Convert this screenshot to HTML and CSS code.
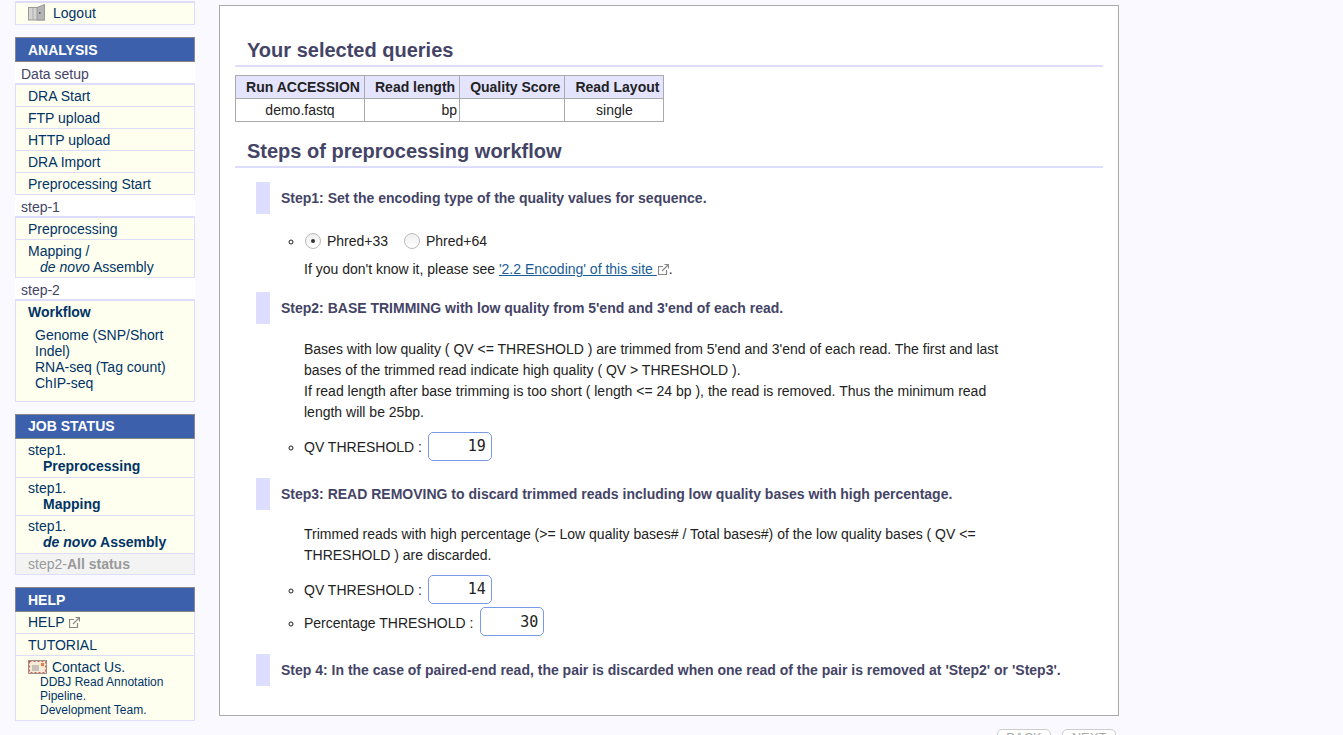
FILE: index.html
```html
<!DOCTYPE html>
<html lang="en">

<head>
    <meta charset="UTF-8">
    <title>Preprocessing workflow</title>
    <link rel="stylesheet" href="styles.css">
</head>

<body>
    <div class="wrapper">
        <div class="sidebar">
            <ul class="menu logoutBox">
                <li class="logout">
                    <svg class="doorIcon" width="18" height="17" viewBox="0 0 18 17">
                        <rect x="0.5" y="3.5" width="16" height="12.5" fill="#d4d4d4" stroke="#999"/>
                        <path d="M9 3.5 L16.5 0.5 V16 H9 Z" fill="#b5b5b5" stroke="#999"/>
                        <path d="M5 4v12" stroke="#aaa"/>
                        <rect x="11" y="8" width="1.5" height="2" fill="#666"/>
                    </svg>
                    <a>Logout</a>
                </li>
            </ul>

            <h3 class="menuTitle">ANALYSIS</h3>
            <p class="menuLabel">Data setup</p>
            <ul class="menu">
                <li><a>DRA Start</a></li>
                <li><a>FTP upload</a></li>
                <li><a>HTTP upload</a></li>
                <li><a>DRA Import</a></li>
                <li><a>Preprocessing Start</a></li>
            </ul>
            <p class="menuLabel">step-1</p>
            <ul class="menu">
                <li><a>Preprocessing</a></li>
                <li class="twoLine mapping"><a>Mapping /<br><span class="indent"><i>de novo</i> Assembly</span></a></li>
            </ul>
            <p class="menuLabel">step-2</p>
            <ul class="menu workflowBox">
                <li class="workflow">
                    <a class="current">Workflow</a>
                    <ul class="subMenu">
                        <li>Genome (SNP/Short Indel)</li>
                        <li>RNA-seq (Tag count)</li>
                        <li>ChIP-seq</li>
                    </ul>
                </li>
            </ul>

            <h3 class="menuTitle jobTitle">JOB STATUS</h3>
            <ul class="menu noTop">
                <li class="twoLine job"><a>step1.<br><b class="indent">Preprocessing</b></a></li>
                <li class="twoLine job"><a>step1.<br><b class="indent">Mapping</b></a></li>
                <li class="twoLine job"><a>step1.<br><b class="indent"><i>de novo</i> Assembly</b></a></li>
                <li class="disabled">step2-<b>All status</b></li>
            </ul>

            <h3 class="menuTitle">HELP</h3>
            <ul class="menu noTop">
                <li class="helpLink">
                    <a>HELP</a>
                    <svg class="extIcon" width="11" height="11" viewBox="0 0 11 11">
                        <path d="M8.5 6v4.5h-8v-8H5" fill="none" stroke="#888" stroke-width="1.2"/>
                        <path d="M4 7 L10 1 M6.5 .5h4v4" fill="none" stroke="#888" stroke-width="1.2"/>
                    </svg>
                </li>
                <li><a>TUTORIAL</a></li>
                <li class="contact">
                    <svg class="mailIcon" width="19" height="14" viewBox="0 0 19 14">
                        <rect x="0.5" y="0.5" width="18" height="13" fill="#f6ead8" stroke="#a09088"/>
                        <rect x="1.5" y="1.5" width="16" height="11" fill="none" stroke="#d0604c" stroke-width="1.2" stroke-dasharray="2 2"/>
                        <path d="M4 6h7M4 8h7M4 10h7" stroke="#999"/>
                        <rect x="13" y="3" width="3" height="3" fill="#e08040"/>
                    </svg>
                    <a>Contact Us.</a>
                    <p class="team">DDBJ Read Annotation Pipeline.<br>Development Team.</p>
                </li>
            </ul>
        </div>

        <div class="main">
            <div class="panel">
                <h2>Your selected queries</h2>
                <table class="queries">
                    <tr>
                        <th class="colRun">Run ACCESSION</th>
                        <th class="colLength">Read length</th>
                        <th class="colScore">Quality Score</th>
                        <th class="colLayout">Read Layout</th>
                    </tr>
                    <tr>
                        <td>demo.fastq</td>
                        <td class="right">bp</td>
                        <td></td>
                        <td>single</td>
                    </tr>
                </table>

                <h2 class="second">Steps of preprocessing workflow</h2>

                <h4 class="step">Step1: Set the encoding type of the quality values for sequence.</h4>
                <ul class="options radioList">
                    <li>
                        <span class="radio checked"></span><span class="radioText">Phred+33</span>
                        <span class="radio"></span><span>Phred+64</span>
                    </li>
                </ul>
                <p class="note">If you don't know it, please see <a class="link">'2.2 Encoding' of this site <svg class="extIcon" width="11" height="11" viewBox="0 0 11 11">
                        <path d="M8.5 6v4.5h-8v-8H5" fill="none" stroke="#888" stroke-width="1.2"/>
                        <path d="M4 7 L10 1 M6.5 .5h4v4" fill="none" stroke="#888" stroke-width="1.2"/>
                    </svg></a>.</p>

                <h4 class="step">Step2: BASE TRIMMING with low quality from 5'end and 3'end of each read.</h4>
                <p class="desc">Bases with low quality ( QV &lt;= THRESHOLD ) are trimmed from 5'end and 3'end of each read. The first and last bases of the trimmed read indicate high quality ( QV &gt; THRESHOLD ).<br>If read length after base trimming is too short ( length &lt;= 24 bp ), the read is removed. Thus the minimum read length will be 25bp.</p>
                <ul class="options">
                    <li class="field">QV THRESHOLD : <input class="num" type="text" value="19"></li>
                </ul>

                <h4 class="step">Step3: READ REMOVING to discard trimmed reads including low quality bases with high percentage.</h4>
                <p class="desc tightDesc">Trimmed reads with high percentage (&gt;= Low quality bases# / Total bases#) of the low quality bases ( QV &lt;= THRESHOLD ) are discarded.</p>
                <ul class="options">
                    <li class="field">QV THRESHOLD : <input class="num" type="text" value="14"></li>
                    <li class="field">Percentage THRESHOLD : <input class="num wide" type="text" value="30"></li>
                </ul>

                <h4 class="step lastStep">Step 4: In the case of paired-end read, the pair is discarded when one read of the pair is removed at 'Step2' or 'Step3'.</h4>
            </div>
            <div class="buttons">
                <button class="btn">BACK</button>
                <button class="btn">NEXT</button>
            </div>
        </div>
    </div>
</body>

</html>
```
FILE: styles.css
```css
* {
    margin: 0;
    padding: 0;
    box-sizing: border-box;
}

html, body {
    height: 735px;
    overflow: hidden;
}

body {
    background: #f9f9ff;
    font-family: "Liberation Sans", Arial, sans-serif;
    font-size: 14px;
    color: #222;
}

ul {
    list-style: none;
}

.wrapper {
    display: flex;
    align-items: flex-start;
    padding: 1px 0 0 15px;
    gap: 24px;
}

/* left menu */
.sidebar {
    width: 180px;
    flex-shrink: 0;
}

.menu {
    border: 1px solid #ddf;
    border-top-width: 2px;
    background: #fffff0;
}

.menu.noTop {
    border-top: none;
    margin-bottom: 12px;
}

.menu > li {
    border-top: 1px solid #ddf;
    min-height: 22px;
    padding: 2px 12px 0;
    line-height: 18px;
    color: #036;
}

.menu > li:first-child {
    border-top: none;
    min-height: 21px;
}

.menu a {
    color: #036;
}

.logoutBox {
    margin-bottom: 12px;
}

.menu > .logout {
    display: flex;
    align-items: center;
    gap: 7px;
    height: 21px;
    padding: 0 12px 2px;
}

.menuTitle {
    background: #3c60ab;
    border: 1px solid #888;
    color: #fff;
    font-size: 14px;
    line-height: 24px;
    height: 25px;
    padding-left: 12px;
}

.jobTitle {
    line-height: 23px;
}

.menuLabel {
    background: #fff;
    color: #446;
    line-height: 25px;
    height: 21px;
    padding-left: 6px;
}

.menu > .twoLine {
    line-height: 16px;
    height: 38px;
}

.menu > .mapping {
    padding-top: 3px;
}

.menu > .job:first-child {
    padding-top: 3px;
}

.indent {
    padding-left: 12px;
}

.job .indent {
    padding-left: 15px;
}

.menu > .workflow {
    padding-bottom: 10px;
}

.workflowBox {
    margin-bottom: 12px;
}

.current {
    font-weight: bold;
}

.subMenu {
    padding: 6px 0 0 7px;
    line-height: 16px;
}

.menu > .disabled {
    background: #f3f3f3;
    color: #999;
    min-height: 21px;
    padding-top: 1px;
}

.menu > .helpLink {
    padding-top: 1px;
}

.menu > .contact {
    padding-bottom: 3px;
}

.mailIcon {
    vertical-align: -2px;
    margin-right: 1px;
}

.team {
    font-size: 12px;
    line-height: 14px;
    padding-left: 12px;
    margin-top: -1px;
}

.extIcon {
    vertical-align: -1px;
    margin-left: 1px;
}

/* main panel */
.main {
    width: 900px;
    padding-top: 4px;
}

.panel {
    background: #fff;
    border: 1px solid #aaa;
    height: 711px;
    padding: 31px 15px 0;
}

h2 {
    color: #446;
    font-size: 20px;
    line-height: 27px;
    height: 30px;
    padding-left: 12px;
    border-bottom: 2px solid #ddf;
}

.second {
    margin-top: 16px;
}

.queries {
    border-collapse: collapse;
    margin-top: 8px;
    font-size: 14px;
}

.queries th, .queries td {
    border: 1px solid #aaa;
    height: 23px;
    padding: 0 2px;
    text-align: center;
}

.queries th {
    background: #e4e4ff;
    padding: 0 4px 0 10px;
    white-space: nowrap;
}

.queries .right {
    text-align: right;
}

.colRun { width: 129px; }
.colLength { width: 95px; }
.colScore { width: 105px; }
.colLayout { width: 99px; }

.step {
    color: #446;
    font-size: 14px;
    line-height: 16px;
    border-left: 14px solid #ddf;
    margin: 14px 0 0 21px;
    padding: 8px 0 8px 11px;
    height: 32px;
}

.step.lastStep {
    margin-top: 15px;
}

.options {
    list-style: circle;
    margin-top: 8px;
    padding-left: 69px;
}

.options li {
    line-height: 33px;
}

.options .field {
    margin-bottom: -1px;
}

.radioList {
    margin-top: 11px;
}

.radio {
    display: inline-block;
    width: 16px;
    height: 16px;
    border-radius: 50%;
    border: 1px solid #bbb;
    background: linear-gradient(#efefef, #fff);
    margin: 0 6px 0 1px;
    position: relative;
    vertical-align: -3px;
}

.radio.checked::after {
    content: '';
    position: absolute;
    top: 5px;
    left: 5px;
    width: 4px;
    height: 4px;
    border-radius: 50%;
    background: #333;
}

.radioText {
    margin-right: 11px;
}

.note {
    margin: 2px 0 0 69px;
    line-height: 18px;
}

.link {
    color: #1a5c96;
    text-decoration: underline;
}

.desc {
    margin: 15px 0 0 69px;
    width: 704px;
    line-height: 21px;
}

.desc.tightDesc {
    margin-top: 14px;
}

.num {
    width: 64px;
    height: 29px;
    margin: 0 0 4px 2px;
    border: 1px solid #7a9ae8;
    border-radius: 5px;
    font-family: "DejaVu Sans Mono", monospace;
    font-size: 15px;
    text-align: right;
    padding-right: 5px;
    vertical-align: middle;
    color: #222;
}

.num.wide {
    margin-left: 3px;
}

.buttons {
    display: flex;
    justify-content: flex-end;
    gap: 11px;
    padding: 13px 3px 0 0;
}

.btn {
    width: 54px;
    height: 24px;
    border: 1px solid #ccc;
    border-radius: 5px;
    background: #fff;
    color: #aaa;
    font-family: "Liberation Sans", Arial, sans-serif;
    font-size: 13px;
    padding-bottom: 7px;
}
```
